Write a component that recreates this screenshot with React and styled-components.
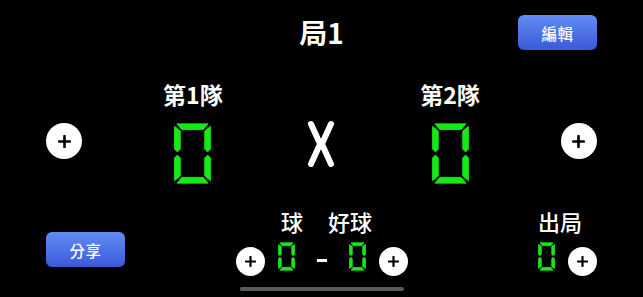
import styled, { createGlobalStyle } from "styled-components";

const GlobalStyle = createGlobalStyle`
  html, body {
    margin: 0;
    padding: 0;
    background: #000;
  }
  body {
    font-family: "Noto Sans CJK TC", "Noto Sans", sans-serif;
  }
`;

const Screen = styled.div`
  position: relative;
  width: 643px;
  height: 297px;
  overflow: hidden;
  background: #000;
  color: #fff;
`;

const Header = styled.div`
  display: grid;
  grid-template-columns: 1fr auto 1fr;
  align-items: center;
  padding: 15px 46px 0;
  height: 35px;
`;

const Title = styled.h1`
  grid-column: 2;
  margin: 0;
  font-size: 28px;
  line-height: 35px;
  font-weight: 700;
`;

const BlueButton = styled.button`
  justify-self: ${(p) => p.$align || "start"};
  width: 79px;
  height: 35px;
  border: none;
  border-radius: 6px;
  background: linear-gradient(#628cf3, #3a59d9);
  color: #fff;
  font-family: inherit;
  font-size: 15.5px;
  font-weight: 500;
  letter-spacing: 0.5px;
  margin-top: ${(p) => p.$top || 0}px;
  cursor: pointer;
`;

const Scoreboard = styled.div`
  display: grid;
  grid-template-columns: repeat(5, 1fr);
  align-items: start;
  justify-items: center;
  margin-top: 30px;
`;

const Team = styled.div`
  display: flex;
  flex-direction: column;
  align-items: center;
`;

const TeamName = styled.div`
  font-size: 23px;
  line-height: 28px;
  font-weight: 700;
  margin-bottom: 15px;
`;

const PlusButton = styled.button`
  width: ${(p) => p.$size}px;
  height: ${(p) => p.$size}px;
  margin-top: ${(p) => p.$top || 0}px;
  padding: 0;
  border: none;
  border-radius: 50%;
  background: #fff;
  display: flex;
  align-items: center;
  justify-content: center;
  flex-shrink: 0;
  cursor: pointer;
`;

const Versus = styled.div`
  margin-top: 40px;
  height: 48px;
  display: flex;
`;

const Bottom = styled.div`
  display: grid;
  grid-template-columns: 1fr auto 1fr;
  align-items: start;
  padding: 0 46px;
  margin-top: 24px;
`;

const CountBlock = styled.div`
  display: flex;
  flex-direction: column;
  align-items: center;
`;

const LabelRow = styled.div`
  display: flex;
  gap: 25px;
  margin-left: 10px;
  font-size: 22px;
  line-height: 26px;
  font-weight: 500;
`;

const Label = styled.span`
  font-size: 22px;
  line-height: 26px;
  font-weight: 500;
`;

const CountRow = styled.div`
  display: flex;
  align-items: flex-start;
  gap: ${(p) => p.$gap || 13}px;
  margin-top: 8px;
`;

const Dash = styled.div`
  width: 10px;
  height: 3px;
  background: #fff;
  margin: 17px 9px 0;
`;

const OutsBlock = styled.div`
  justify-self: end;
  display: flex;
  flex-direction: column;
  align-items: flex-start;
`;

const HomeBar = styled.div`
  position: absolute;
  left: 50%;
  bottom: 6px;
  width: 164px;
  height: 4px;
  margin-left: -82px;
  border-radius: 2px;
  background: #5a5a5a;
`;

const SEGMENTS = {
  0: "abcdef",
  1: "bc",
  2: "abged",
  3: "abgcd",
  4: "fgbc",
  5: "afgcd",
  6: "afgedc",
  7: "abc",
  8: "abcdefg",
  9: "abcdfg",
};

function Digit({ value, w, h, t }) {
  const g = t * 0.25;
  const m = h / 2;
  const on = SEGMENTS[value] || "";
  const pts = {
    a: [[g + 1, 0], [w - g - 1, 0], [w - t - g, t], [t + g, t]],
    d: [[t + g, h - t], [w - t - g, h - t], [w - g - 1, h], [g + 1, h]],
    f: [[0, g + 1], [t, t + g], [t, m - g - t / 2], [t / 2, m - g], [0, m - g - t / 2]],
    e: [[0, m + g + t / 2], [t / 2, m + g], [t, m + g + t / 2], [t, h - t - g], [0, h - g - 1]],
    b: [[w, g + 1], [w - t, t + g], [w - t, m - g - t / 2], [w - t / 2, m - g], [w, m - g - t / 2]],
    c: [[w, m + g + t / 2], [w - t / 2, m + g], [w - t, m + g + t / 2], [w - t, h - t - g], [w, h - g - 1]],
    g: [[t / 2 + g, m], [t + g, m - t / 2], [w - t - g, m - t / 2], [w - t / 2 - g, m], [w - t - g, m + t / 2], [t + g, m + t / 2]],
  };
  return (
    <svg width={w} height={h} viewBox={`-0.5 -0.5 ${w + 1} ${h + 1}`}>
      {Object.keys(pts)
        .filter((k) => on.includes(k))
        .map((k) => (
          <polygon
            key={k}
            points={pts[k].map((p) => p.join(",")).join(" ")}
            fill="#17e817"
            stroke="#17e817"
            strokeWidth="0.8"
            strokeLinejoin="round"
          />
        ))}
    </svg>
  );
}

function PlusIcon({ size, stroke }) {
  return (
    <svg width={size} height={size} viewBox="0 0 12 12">
      <path d="M6 1v10M1 6h10" stroke="#000" strokeWidth={stroke} strokeLinecap="round" />
    </svg>
  );
}

function Plus({ big, top }) {
  return big ? (
    <PlusButton $size={36} $top={top}>
      <PlusIcon size={13} stroke={2.4} />
    </PlusButton>
  ) : (
    <PlusButton $size={29} $top={top}>
      <PlusIcon size={11} stroke={2.4} />
    </PlusButton>
  );
}

function VersusMark() {
  return (
    <svg width="30" height="48" viewBox="0 0 30 48">
      <g stroke="#fff" strokeWidth="6" strokeLinecap="round">
        <line x1="5" y1="4" x2="13.3" y2="22.3" />
        <line x1="25" y1="4" x2="16.7" y2="22.3" />
        <line x1="13.3" y1="25.7" x2="5" y2="44" />
        <line x1="16.7" y1="25.7" x2="25" y2="44" />
      </g>
    </svg>
  );
}

export default function App() {
  const score = { home: 0, away: 0, balls: 0, strikes: 0, outs: 0 };

  return (
    <Screen>
      <GlobalStyle />
      <Header>
        <Title>局1</Title>
        <BlueButton $align="end">編輯</BlueButton>
      </Header>

      <Scoreboard>
        <Plus big top={43} />
        <Team>
          <TeamName>第1隊</TeamName>
          <Digit value={score.home} w={37} h={61} t={6} />
        </Team>
        <Versus>
          <VersusMark />
        </Versus>
        <Team>
          <TeamName>第2隊</TeamName>
          <Digit value={score.away} w={37} h={61} t={6} />
        </Team>
        <Plus big top={43} />
      </Scoreboard>

      <Bottom>
        <BlueButton $top={24}>分享</BlueButton>
        <CountBlock>
          <LabelRow>
            <span>球</span>
            <span>好球</span>
          </LabelRow>
          <CountRow>
            <Plus top={5} />
            <Digit value={score.balls} w={17} h={29} t={3} />
            <Dash />
            <Digit value={score.strikes} w={17} h={29} t={3} />
            <Plus top={5} />
          </CountRow>
        </CountBlock>
        <OutsBlock>
          <Label>出局</Label>
          <CountRow>
            <Digit value={score.outs} w={17} h={29} t={3} />
            <Plus top={5} />
          </CountRow>
        </OutsBlock>
      </Bottom>

      <HomeBar />
    </Screen>
  );
}
